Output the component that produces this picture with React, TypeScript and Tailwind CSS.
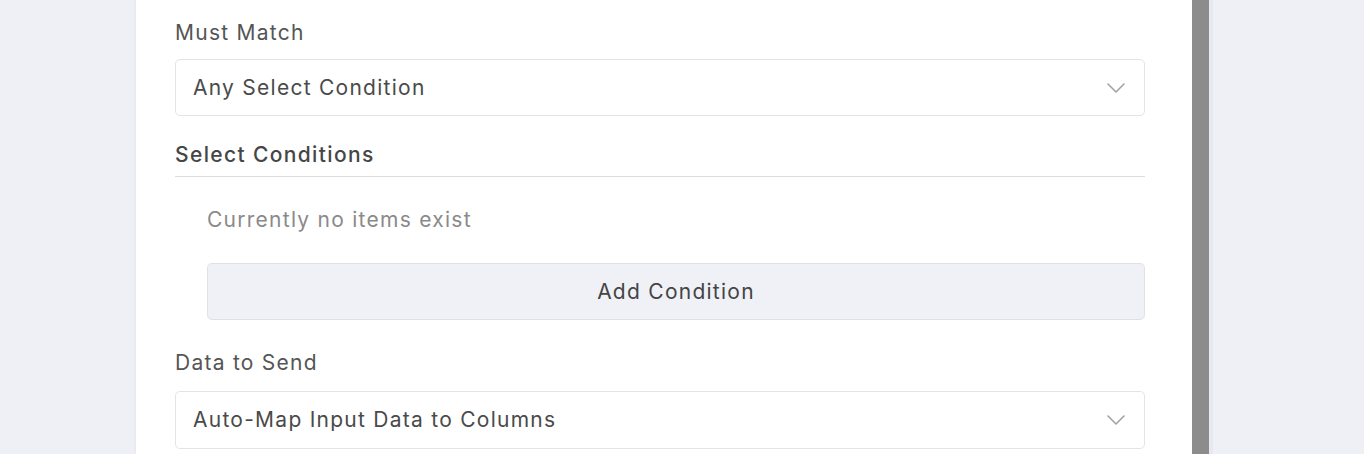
import React from 'react';

function Chevron() {
  return (
    <svg width="20" height="12" viewBox="0 0 20 12" fill="none" className="shrink-0">
      <polyline points="2,2 10,10 18,2" stroke="#a2a2a6" strokeWidth="1.6" strokeLinecap="round" strokeLinejoin="round" />
    </svg>
  );
}

function SelectBox({ value, className = '' }: { value: string; className?: string }) {
  return (
    <div className={`flex h-[57px] items-center justify-between rounded-[5px] border border-[#e2e4ea] bg-white pl-[17px] pr-[18px] ${className}`}>
      <span className="text-[21px] tracking-[0.06em] text-[#4a4a4a]">{value}</span>
      <Chevron />
    </div>
  );
}

export default function App() {
  return (
    <main
      className="flex h-[454px] w-full overflow-hidden bg-[#eef0f5]"
      style={{ fontFamily: 'Inter, "Noto Sans", sans-serif' }}
    >
      <div className="w-[136px] shrink-0" />
      <div className="flex w-[1056px] shrink-0 flex-col bg-white pl-[39px] pr-[47px] pt-[21px] shadow-[0_0_4px_rgba(0,0,0,0.06)]">
        <div className="mb-[14px] text-[21px] leading-[24px] tracking-[0.06em] text-[#555]">Must Match</div>
        <SelectBox value="Any Select Condition" />

        <div className="mt-[27px] border-b border-[#dcdde2] pb-[9px] text-[21px] font-medium leading-[24px] tracking-[0.065em] text-[#464646]">
          Select Conditions
        </div>

        <div className="pl-[32px]">
          <div className="mt-[31px] text-[21px] leading-[24px] tracking-[0.06em] text-[#8a8a8a]">Currently no items exist</div>
          <button className="mt-[31px] flex h-[57px] w-full items-center justify-center rounded-[5px] border border-[#dfe1e8] bg-[#f0f1f6] text-[21px] tracking-[0.06em] text-[#444]">
            Add Condition
          </button>
        </div>

        <div className="mb-[16px] mt-[31px] text-[21px] leading-[24px] tracking-[0.06em] text-[#555]">Data to Send</div>
        <SelectBox value="Auto-Map Input Data to Columns" className="h-[58px]" />
      </div>
      <div className="w-[17px] shrink-0 bg-[#8c8c8c]" />
      <div className="w-[4px] shrink-0 bg-[#e6e9f0]" />
      <div className="flex-1" />
    </main>
  );
}
